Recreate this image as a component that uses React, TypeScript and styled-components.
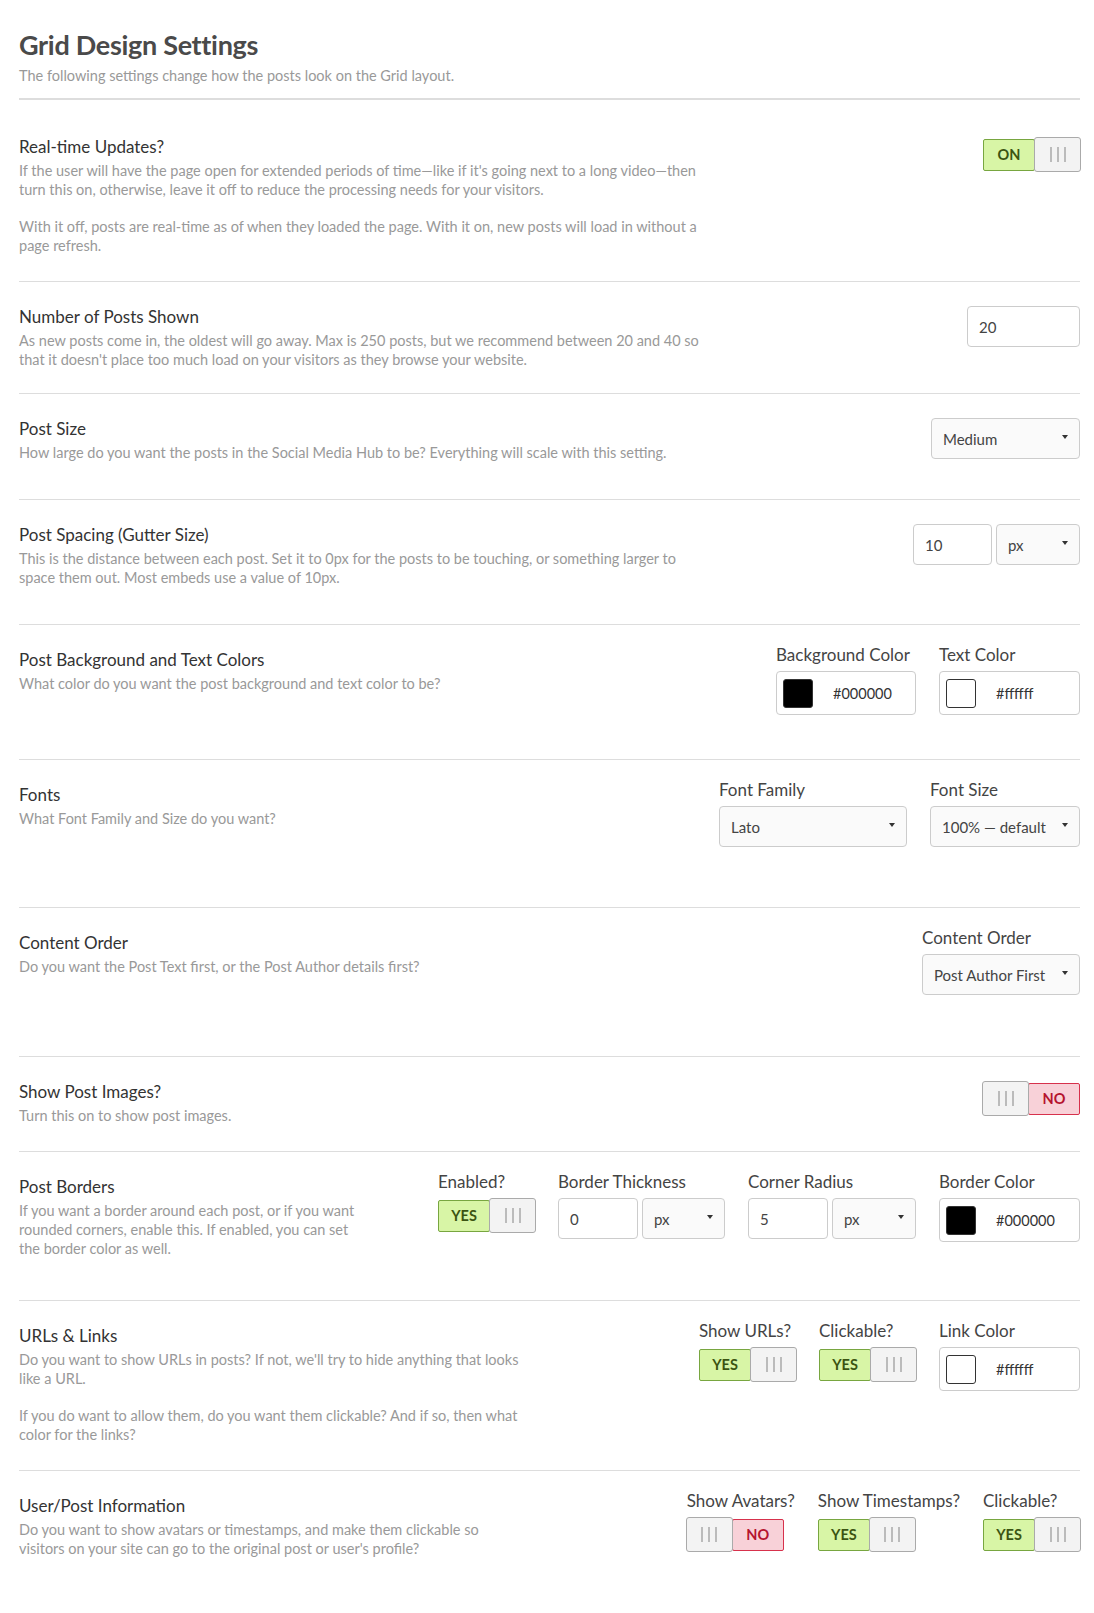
import React from "react";
import styled, { createGlobalStyle } from "styled-components";

const Global = createGlobalStyle`
  body {
    margin: 0;
    background: #fff;
    font-family: Lato, "Open Sans", sans-serif;
  }
`;

const Page = styled.div`
  padding: 28px 14px 40px 19px;
`;

const Header = styled.div`
  padding-bottom: 14px;
  border-bottom: 2px solid #ddd;
`;

const Title = styled.h1`
  margin: 0;
  font-size: 27px;
  font-weight: 700;
  color: #4a4a4a;
  letter-spacing: -0.3px;
`;

const Subtitle = styled.div`
  margin-top: 6px;
  font-size: 14.5px;
  color: #999;
`;

const Row = styled.div<{ $h: number; $top?: number }>`
  display: flex;
  justify-content: space-between;
  align-items: flex-start;
  min-height: ${(p) => p.$h}px;
  box-sizing: border-box;
  padding-top: ${(p) => p.$top ?? 24}px;
  border-bottom: 1px solid #ddd;
  &:last-child {
    border-bottom: none;
  }
`;

const Info = styled.div<{ $w: number }>`
  max-width: ${(p) => p.$w}px;
`;

const RowTitle = styled.div`
  font-size: 17px;
  color: #333;
  line-height: 22px;
`;

const Desc = styled.p`
  margin: 3px 0 0;
  font-size: 14.5px;
  line-height: 19px;
  color: #999;
  & + & {
    margin-top: 18px;
  }
`;

const Controls = styled.div<{ $top?: number }>`
  display: flex;
  gap: 23px;
  align-items: flex-start;
  margin-top: ${(p) => p.$top ?? 0}px;
`;

const Pair = styled.div`
  display: flex;
  gap: 4px;
`;

const Group = styled.div`
  display: flex;
  flex-direction: column;
  gap: 6px;
`;

const Label = styled.div`
  font-size: 17px;
  color: #444;
  line-height: 21px;
`;

const Input = styled.div<{ $w: number }>`
  width: ${(p) => p.$w}px;
  height: 41px;
  box-sizing: border-box;
  border: 1px solid #ccc;
  border-radius: 4px;
  padding: 0 11px;
  display: flex;
  align-items: center;
  font-size: 15px;
  color: #444;
  background: #fff;
`;

const Select = styled(Input)`
  background: #fafafa;
  justify-content: space-between;
  &::after {
    content: "";
    border-left: 3.5px solid transparent;
    border-right: 3.5px solid transparent;
    border-top: 4px solid #333;
    margin-top: -3px;
  }
`;

const ColorBox = styled(Input)`
  height: 44px;
  padding: 0 6px;
  gap: 20px;
  font-size: 14.5px;
  color: #333;
`;

const Swatch = styled.span<{ $c: string }>`
  width: 30px;
  height: 29px;
  border-radius: 3px;
  border: 1px solid #333;
  background: ${(p) => p.$c};
  box-sizing: border-box;
`;

const Toggle = styled.div`
  display: flex;
  align-items: center;
`;

const State = styled.div<{ $on: boolean; $w: number }>`
  width: ${(p) => p.$w}px;
  height: 32px;
  box-sizing: border-box;
  display: flex;
  align-items: center;
  justify-content: center;
  font-size: 14.5px;
  font-weight: 700;
  border-radius: 2px;
  background: ${(p) => (p.$on ? "#d8f5a6" : "#f8d1d8")};
  border: 1px solid ${(p) => (p.$on ? "#78a640" : "#d7314c")};
  color: ${(p) => (p.$on ? "#3b5412" : "#b5142e")};
`;

const Handle = styled.div`
  width: 47px;
  height: 35px;
  box-sizing: border-box;
  background: #f3f3f3;
  border: 1px solid #aaa;
  border-radius: 3px;
  display: flex;
  align-items: center;
  justify-content: center;
  gap: 5px;
  margin: 0 -1px;
  position: relative;
  & > span {
    width: 2px;
    height: 15px;
    background: #bbb;
  }
`;

function Switch({ on, label, w = 52 }: { on: boolean; label: string; w?: number }) {
  const handle = (
    <Handle>
      <span />
      <span />
      <span />
    </Handle>
  );
  return (
    <Toggle>
      {on ? (
        <>
          <State $on $w={w}>{label}</State>
          {handle}
        </>
      ) : (
        <>
          {handle}
          <State $on={false} $w={w}>{label}</State>
        </>
      )}
    </Toggle>
  );
}

export default function App() {
  return (
    <>
      <Global />
      <Page>
        <Header>
          <Title>Grid Design Settings</Title>
          <Subtitle>The following settings change how the posts look on the Grid layout.</Subtitle>
        </Header>

        <Row $h={182} $top={36}>
          <Info $w={690}>
            <RowTitle>Real-time Updates?</RowTitle>
            <Desc>
              If the user will have the page open for extended periods of time—like if it's going next to a long video—then
              turn this on, otherwise, leave it off to reduce the processing needs for your visitors.
            </Desc>
            <Desc>
              With it off, posts are real-time as of when they loaded the page. With it on, new posts will load in without a
              page refresh.
            </Desc>
          </Info>
          <Controls $top={1}>
            <Switch on label="ON" />
          </Controls>
        </Row>

        <Row $h={112}>
          <Info $w={690}>
            <RowTitle>Number of Posts Shown</RowTitle>
            <Desc>
              As new posts come in, the oldest will go away. Max is 250 posts, but we recommend between 20 and 40 so
              that it doesn't place too much load on your visitors as they browse your website.
            </Desc>
          </Info>
          <Input $w={113}>20</Input>
        </Row>

        <Row $h={106}>
          <Info $w={700}>
            <RowTitle>Post Size</RowTitle>
            <Desc>How large do you want the posts in the Social Media Hub to be? Everything will scale with this setting.</Desc>
          </Info>
          <Select $w={149}>Medium</Select>
        </Row>

        <Row $h={125}>
          <Info $w={680}>
            <RowTitle>Post Spacing (Gutter Size)</RowTitle>
            <Desc>
              This is the distance between each post. Set it to 0px for the posts to be touching, or something larger to
              space them out. Most embeds use a value of 10px.
            </Desc>
          </Info>
          <Pair>
            <Input $w={79}>10</Input>
            <Select $w={84}>px</Select>
          </Pair>
        </Row>

        <Row $h={135} $top={19}>
          <Info $w={600}>
            <RowTitle style={{ marginTop: 5 }}>Post Background and Text Colors</RowTitle>
            <Desc>What color do you want the post background and text color to be?</Desc>
          </Info>
          <Controls>
            <Group>
              <Label>Background Color</Label>
              <ColorBox $w={140}>
                <Swatch $c="#000" />
                #000000
              </ColorBox>
            </Group>
            <Group>
              <Label>Text Color</Label>
              <ColorBox $w={141}>
                <Swatch $c="#fff" />
                #ffffff
              </ColorBox>
            </Group>
          </Controls>
        </Row>

        <Row $h={148} $top={19}>
          <Info $w={600}>
            <RowTitle style={{ marginTop: 5 }}>Fonts</RowTitle>
            <Desc>What Font Family and Size do you want?</Desc>
          </Info>
          <Controls>
            <Group>
              <Label>Font Family</Label>
              <Select $w={188}>Lato</Select>
            </Group>
            <Group>
              <Label>Font Size</Label>
              <Select $w={150}>100% — default</Select>
            </Group>
          </Controls>
        </Row>

        <Row $h={149} $top={19}>
          <Info $w={600}>
            <RowTitle style={{ marginTop: 5 }}>Content Order</RowTitle>
            <Desc>Do you want the Post Text first, or the Post Author details first?</Desc>
          </Info>
          <Group>
            <Label>Content Order</Label>
            <Select $w={158}>Post Author First</Select>
          </Group>
        </Row>

        <Row $h={95}>
          <Info $w={600}>
            <RowTitle>Show Post Images?</RowTitle>
            <Desc>Turn this on to show post images.</Desc>
          </Info>
          <Switch on={false} label="NO" />
        </Row>

        <Row $h={149} $top={19}>
          <Info $w={345}>
            <RowTitle style={{ marginTop: 5 }}>Post Borders</RowTitle>
            <Desc>
              If you want a border around each post, or if you want rounded corners, enable this. If enabled, you can set
              the border color as well.
            </Desc>
          </Info>
          <Controls>
            <Group>
              <Label>Enabled?</Label>
              <Switch on label="YES" />
            </Group>
            <Group>
              <Label>Border Thickness</Label>
              <Pair>
                <Input $w={80}>0</Input>
                <Select $w={83}>px</Select>
              </Pair>
            </Group>
            <Group>
              <Label>Corner Radius</Label>
              <Pair>
                <Input $w={80}>5</Input>
                <Select $w={84}>px</Select>
              </Pair>
            </Group>
            <Group>
              <Label>Border Color</Label>
              <ColorBox $w={141}>
                <Swatch $c="#000" />
                #000000
              </ColorBox>
            </Group>
          </Controls>
        </Row>

        <Row $h={170} $top={19}>
          <Info $w={520}>
            <RowTitle style={{ marginTop: 5 }}>URLs &amp; Links</RowTitle>
            <Desc>Do you want to show URLs in posts? If not, we'll try to hide anything that looks like a URL.</Desc>
            <Desc>If you do want to allow them, do you want them clickable? And if so, then what color for the links?</Desc>
          </Info>
          <Controls>
            <Group>
              <Label>Show URLs?</Label>
              <Switch on label="YES" />
            </Group>
            <Group>
              <Label>Clickable?</Label>
              <Switch on label="YES" />
            </Group>
            <Group>
              <Label>Link Color</Label>
              <ColorBox $w={141}>
                <Swatch $c="#fff" />
                #ffffff
              </ColorBox>
            </Group>
          </Controls>
        </Row>

        <Row $h={120} $top={19}>
          <Info $w={490}>
            <RowTitle style={{ marginTop: 5 }}>User/Post Information</RowTitle>
            <Desc>
              Do you want to show avatars or timestamps, and make them clickable so visitors on your site can go to the
              original post or user's profile?
            </Desc>
          </Info>
          <Controls>
            <Group>
              <Label>Show Avatars?</Label>
              <Switch on={false} label="NO" />
            </Group>
            <Group>
              <Label>Show Timestamps?</Label>
              <Switch on label="YES" />
            </Group>
            <Group>
              <Label>Clickable?</Label>
              <Switch on label="YES" />
            </Group>
          </Controls>
        </Row>
      </Page>
    </>
  );
}
